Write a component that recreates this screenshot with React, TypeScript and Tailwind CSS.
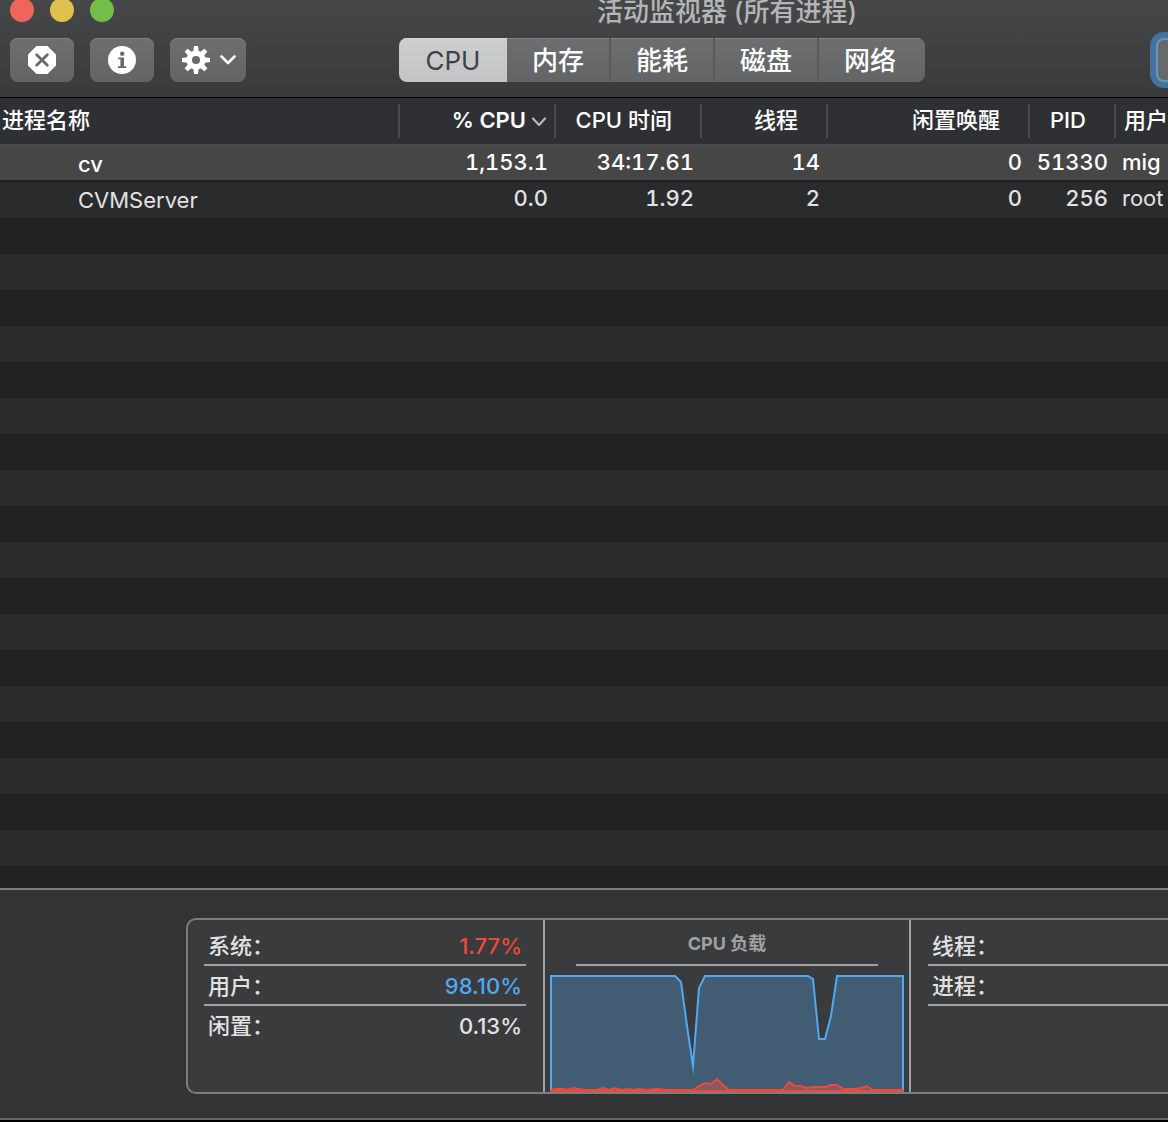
import type { ReactNode } from "react";

const tabs = ["CPU", "内存", "能耗", "磁盘", "网络"];

const columns = [
  { label: "% CPU", width: "w-[156px]", sorted: true },
  { label: "CPU 时间", width: "w-[146px]" },
  { label: "线程", width: "w-[126px]" },
  { label: "闲置唤醒", width: "w-[202px]" },
  { label: "PID", width: "w-[86px]" },
];

const processes = [
  { name: "cv", values: ["1,153.1", "34:17.61", "14", "0", "51330"], user: "mig", selected: true },
  { name: "CVMServer", values: ["0.0", "1.92", "2", "0", "256"], user: "root", selected: false },
];

const userLoad =
  "M1 118V2H125L131 8L137 52L143 92L149 14L155 2H258L263 5L269 65H275L281 42L287 2H353V118";
const systemLoad =
  "M1 116L6 115H13L18 116L23 114L29 115L35 116H47L53 114L59 116L65 114L71 116L77 115L83 116L89 115L95 116L107 115L117 116H143L149 112L155 109L161 110L167 105L173 111L179 116H233L239 108L245 112H251L257 114L263 113H275L281 111H287L293 115H305L311 114L317 112L323 116H353";

function ToolButton({ label, width, children }: { label: string; width: string; children: ReactNode }) {
  return (
    <button
      type="button"
      aria-label={label}
      className={`flex h-11 items-center justify-center rounded-lg bg-linear-to-b from-[#6d6e70] to-[#636466] shadow-[inset_0_1px_#808183] ${width}`}
    >
      {children}
    </button>
  );
}

function Stat({ label, value, color, last }: { label: string; value?: string; color?: string; last?: boolean }) {
  return (
    <div
      className={`flex h-10 items-center justify-between px-1 font-medium ${last ? "" : "border-b-2 border-[#a0a1a1] pt-0.5"}`}
    >
      <dt>{label}</dt>
      <dd className={color}>{value}</dd>
    </div>
  );
}

function LoadChart() {
  return (
    <svg viewBox="0 0 354 118" className="mx-auto mt-2 block h-[118px] w-[354px]" role="img" aria-label="CPU 负载">
      <path d={userLoad} fill="#425d73" stroke="#4eaaf2" strokeWidth="2" strokeMiterlimit="10" />
      <path d={`${systemLoad}V118H1Z`} fill="#865a63" />
      <path d={systemLoad} fill="none" stroke="#ec4b3c" strokeWidth="2" />
      <path d="M0 117H354" stroke="#ec4b3c" strokeWidth="2" />
    </svg>
  );
}

export default function App() {
  return (
    <div className="overflow-hidden bg-black font-['Inter','Noto_Sans_CJK_SC',sans-serif] text-[22px] leading-7 text-[#e2e2e2]">
      <div className="flex min-h-screen w-full min-w-[1454px] flex-col border-b-2 border-black">
        <header className="border-b border-black bg-linear-to-b from-[#464749] to-[#393a3a]">
          <div className="relative flex h-[38px] items-start justify-center">
            <div className="absolute -top-0.5 left-2.5 flex gap-4">
              <button type="button" aria-label="关闭" className="size-6 rounded-full bg-[#ed655b]" />
              <button type="button" aria-label="最小化" className="size-6 rounded-full bg-[#e0c04c]" />
              <button type="button" aria-label="缩放" className="size-6 rounded-full bg-[#72be47]" />
            </div>
            <h1 className="text-[26px] leading-6 font-medium text-[#b4b5b6]">活动监视器 (所有进程)</h1>
          </div>
          <div className="flex h-[59px] items-start px-2.5">
            <div className="flex gap-4">
              <ToolButton label="退出进程" width="w-16">
                <svg viewBox="0 0 28 28" className="size-7">
                  <path d="M8.5 0H19.5L28 8.5V19.5L19.5 28H8.5L0 19.5V8.5Z" fill="#fff" />
                  <path d="M8.7 8.7L19.3 19.3M19.3 8.7L8.7 19.3" stroke="#68696b" strokeWidth="2.8" strokeLinecap="round" />
                </svg>
              </ToolButton>
              <ToolButton label="检查进程" width="w-16">
                <svg viewBox="0 0 28 28" className="size-7">
                  <circle cx="14" cy="14" r="14" fill="#fff" />
                  <circle cx="14.2" cy="7.8" r="2.2" fill="#68696b" />
                  <path d="M10.3 11.5H16V20.3H18.3V22H10V20.3H12.4V13.2H10.3Z" fill="#68696b" />
                </svg>
              </ToolButton>
              <ToolButton label="操作" width="w-[76px]">
                <svg viewBox="0 0 28 28" className="ml-0.5 size-7">
                  <g fill="#fff">
                    {[0, 45, 90, 135].map((angle) => (
                      <path key={angle} d="M12 0H16L16.9 7V21L16 28H12L11.1 21V7Z" transform={`rotate(${angle} 14 14)`} />
                    ))}
                    <circle cx="14" cy="14" r="9.6" />
                  </g>
                  <circle cx="14" cy="14" r="4" fill="#68696b" />
                </svg>
                <svg viewBox="0 0 16 10" className="ml-2.5 h-2.5 w-4" fill="none">
                  <path d="M1.5 1.5L8 8L14.5 1.5" stroke="#fff" strokeWidth="2.6" strokeLinecap="round" strokeLinejoin="round" />
                </svg>
              </ToolButton>
            </div>
            <nav className="ml-[153px] flex h-11 overflow-hidden rounded-lg text-[26px]">
              {tabs.map((tab, i) => (
                <button
                  key={tab}
                  type="button"
                  aria-pressed={i === 0}
                  className={
                    i === 0
                      ? "w-[108px] bg-linear-to-b from-[#cccdcf] to-[#c3c4c6] pt-0.5 text-[#3f4041] shadow-[inset_0_1px_#d6d7d8]"
                      : `bg-linear-to-b from-[#6d6e70] to-[#636466] pt-0.5 font-medium text-white shadow-[inset_0_1px_#808183] ${
                          i === tabs.length - 1 ? "w-[106px] pr-1" : "w-[104px] border-r-2 border-[#58595b]"
                        }`
                  }
                >
                  {tab}
                </button>
              ))}
            </nav>
            <input
              type="search"
              aria-label="搜索"
              className="ml-auto h-11 w-72 rounded-lg border-2 border-[#6596c2] bg-[#68696b] px-3 text-white ring-6 ring-[#45719b] outline-none"
            />
          </div>
        </header>

        <table className="w-full table-fixed border-collapse">
          <thead className="bg-[#2f3034] text-white">
            <tr className="h-12 shadow-[inset_0_-2px_#48494d]">
              <th scope="col" className="w-[400px] p-0 pb-0.5 text-left font-medium">
                <div className="flex h-[34px] items-center border-r-2 border-[#4a4b4e] pb-0.5 pl-0.5">进程名称</div>
              </th>
              {columns.map((column) => (
                <th
                  key={column.label}
                  scope="col"
                  className={`p-0 pb-0.5 ${column.width} ${column.sorted ? "font-semibold" : "font-medium"}`}
                >
                  <div className="relative flex h-[34px] items-center justify-end border-r-2 border-[#4a4b4e] pr-7 pb-0.5">
                    {column.label}
                    {column.sorted && (
                      <svg viewBox="0 0 14 10" className="absolute top-[13px] right-2 h-2.5 w-3.5" fill="none">
                        <path d="M1 1.5L7 8L13 1.5" stroke="#b9babb" strokeWidth="2.2" strokeLinecap="round" strokeLinejoin="round" />
                      </svg>
                    )}
                  </div>
                </th>
              ))}
              <th scope="col" className="p-0 pb-1 pl-2 text-left font-medium">
                用户
              </th>
            </tr>
          </thead>
          <tbody>
            {processes.map((process) => (
              <tr
                key={process.name}
                className={
                  process.selected
                    ? "h-9 bg-[#464646] font-medium text-white shadow-[inset_0_-2px_#1f2022]"
                    : "h-9 bg-[#2a2b2d]"
                }
              >
                <td className="p-0 pl-[78px]">{process.name}</td>
                {process.values.map((value, i) => (
                  <td key={i} className="p-0 pr-2 pb-1 text-right font-medium tabular-nums">
                    {value}
                  </td>
                ))}
                <td className="p-0 pb-1 pl-1.5">{process.user}</td>
              </tr>
            ))}
          </tbody>
        </table>

        <div className="flex-1 bg-[repeating-linear-gradient(#202123_0_36px,#2a2b2d_36px_72px)]" />

        <footer className="border-y-2 border-t-[#7c7d7d] border-b-[#626365] bg-[#323335] pt-7 pb-6">
          <div className="mx-auto grid h-44 w-[1082px] grid-cols-[357px_366px_1fr] rounded-[10px] border-2 border-[#7c7d7d] bg-[#3a3b3c]">
            <dl className="border-r-2 border-[#a0a1a1] pt-1.5 pr-[17px] pl-4">
              <Stat label="系统：" value="1.77%" color="text-[#ec4b3c]" />
              <Stat label="用户：" value="98.10%" color="text-[#4eaaf2]" />
              <Stat label="闲置：" value="0.13%" last />
            </dl>
            <section className="border-r-2 border-[#a0a1a1]">
              <h2 className="mx-[31px] flex h-[46px] items-center justify-center border-b-2 border-[#a0a1a1] pt-1 text-lg font-bold text-[#a0a1a1]">
                CPU 负载
              </h2>
              <LoadChart />
            </section>
            <dl className="pt-1.5 pr-4 pl-[17px]">
              <Stat label="线程：" />
              <Stat label="进程：" />
            </dl>
          </div>
        </footer>
      </div>
    </div>
  );
}
